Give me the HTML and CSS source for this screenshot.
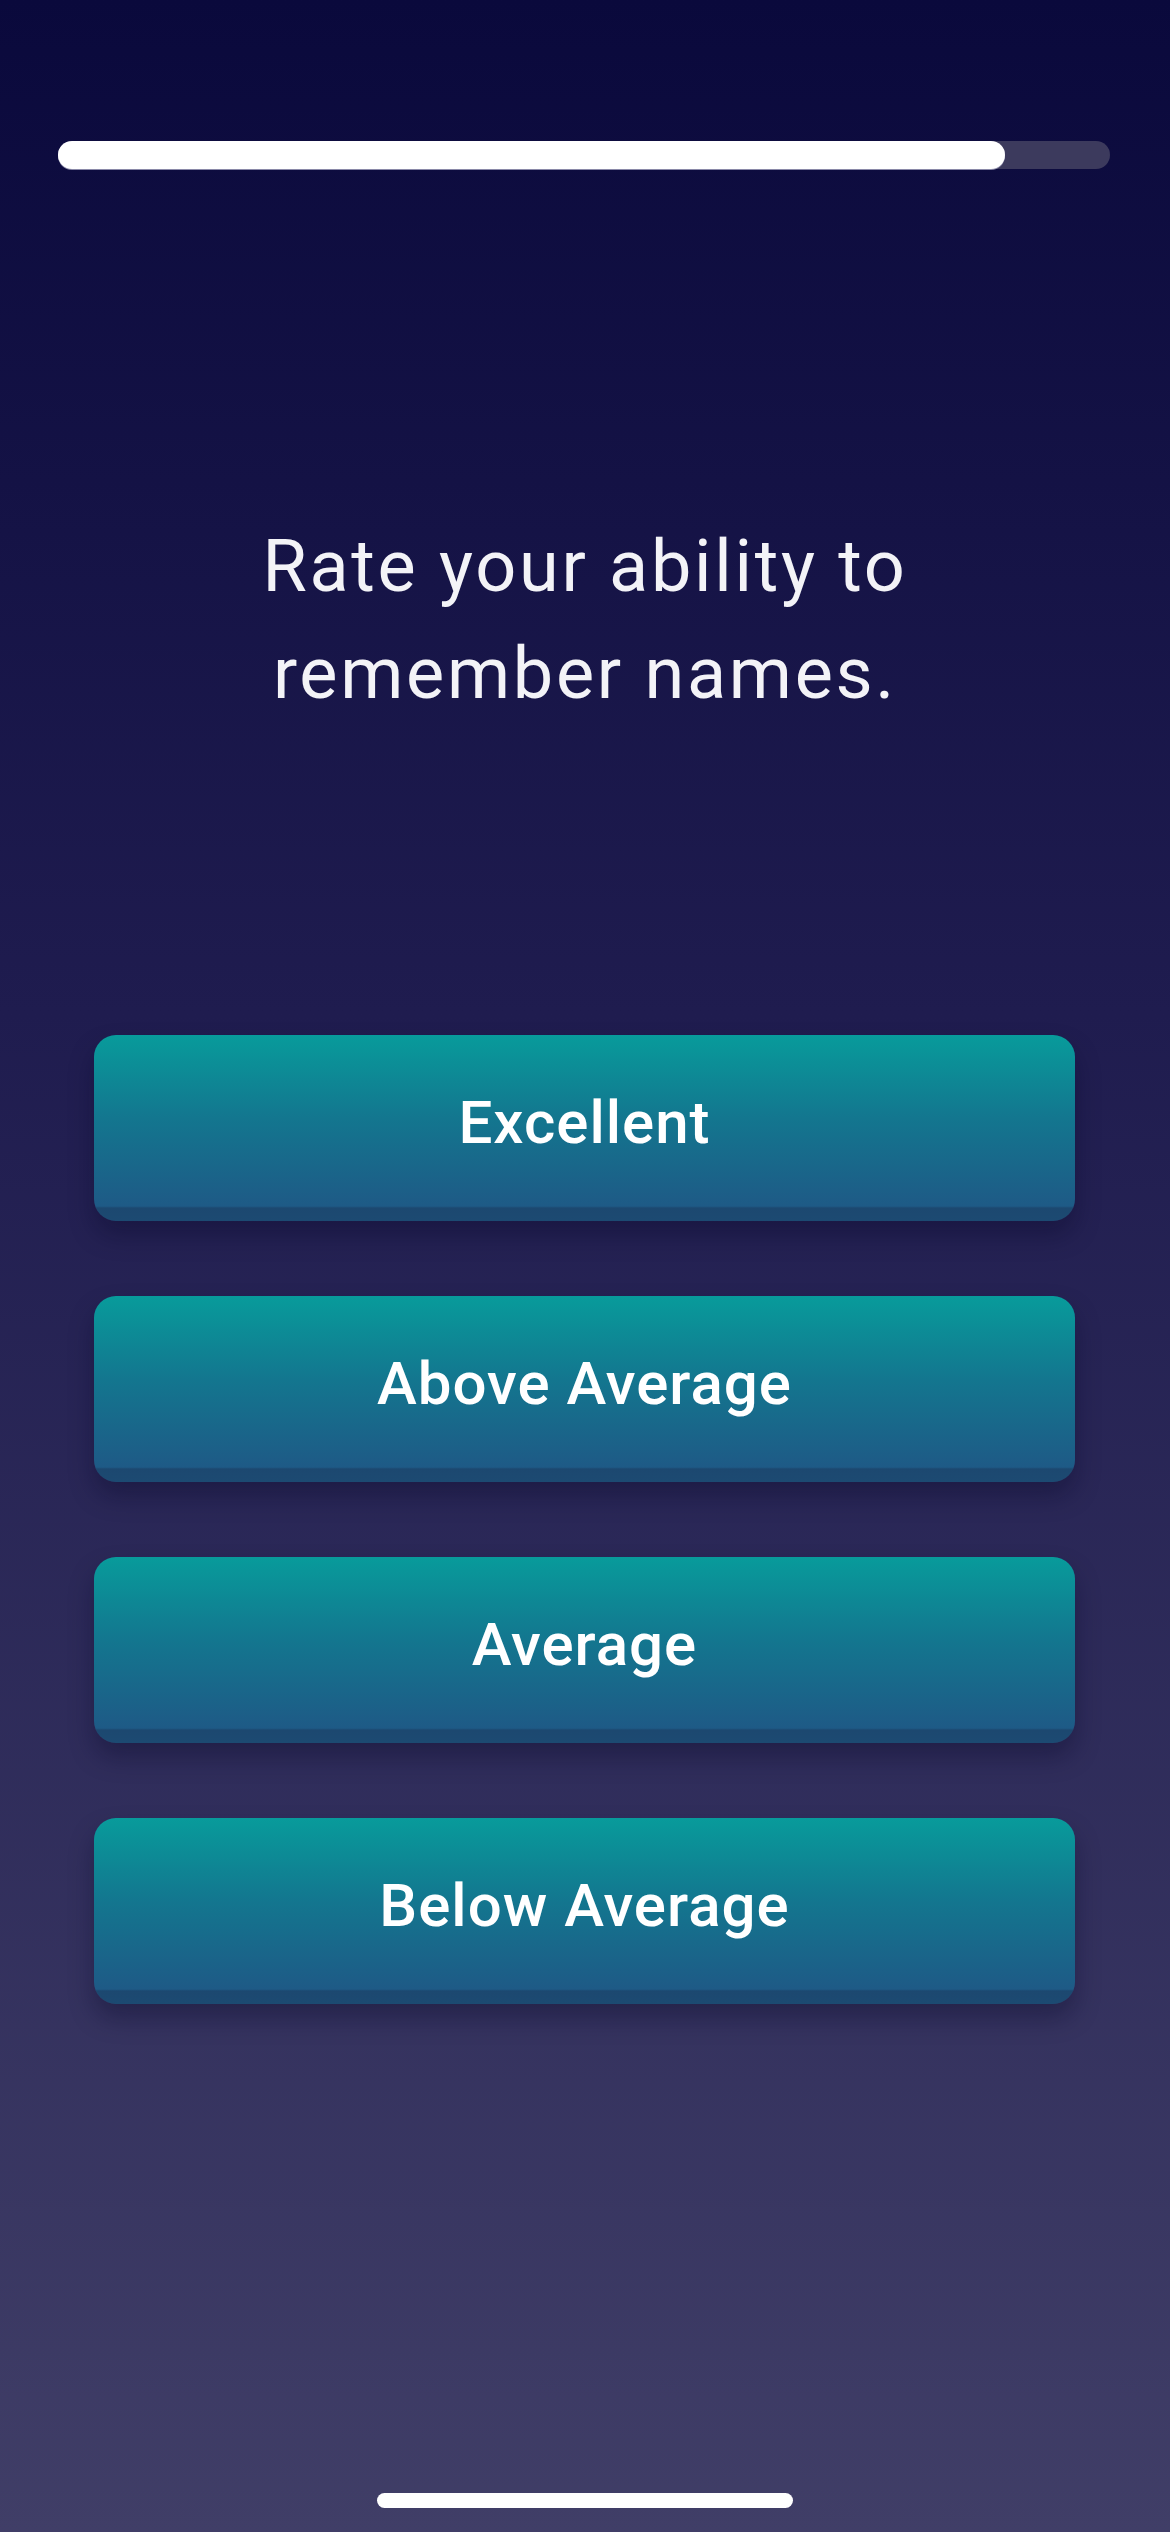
FILE: index.html
```html
<!DOCTYPE html>
<html lang="en">

<head>
    <meta charset="UTF-8">
    <meta name="viewport" content="width=device-width, initial-scale=1.0">
    <title>quiz</title>
    <link rel="stylesheet" href="styles.css">
</head>

<body>
    <div class="screen">
        <div class="progress">
            <div class="progressFill"></div>
        </div>

        <h1 class="question">Rate your ability to<br>remember names.</h1>

        <div class="answers">
            <button class="answer">Excellent</button>
            <button class="answer">Above Average</button>
            <button class="answer">Average</button>
            <button class="answer">Below Average</button>
        </div>

        <div class="homeBar"></div>
    </div>
</body>

</html>
```

FILE: styles.css
```css
* {
    margin: 0;
    padding: 0;
    box-sizing: border-box;
}

body {
    font-family: Roboto, "Noto Sans", sans-serif;
    background: linear-gradient(180deg, #0a093c 0%, #1f1c4f 40%, #403e67 100%);
    width: 1170px;
    height: 2532px;
    overflow: hidden;
}

.screen {
    display: flex;
    flex-direction: column;
    height: 100%;
    padding: 141px 0 0;
}

.progress {
    margin: 0 60px 0 58px;
    height: 28px;
    border-radius: 14px;
    background-color: #3c3a5d;
}

.progressFill {
    width: 90%;
    height: 100%;
    border-radius: 14px;
    background-color: #ffffff;
    box-shadow: 0 1px 0 #8a89a8;
}

.question {
    margin-top: 344px;
    text-align: center;
    color: #f3f3f7;
    font-weight: 400;
    font-size: 72px;
    line-height: 107px;
    letter-spacing: 2.7px;
}

.answers {
    display: flex;
    flex-direction: column;
    gap: 75px;
    margin-top: 308px;
    padding: 0 95px 0 94px;
}

.answer {
    height: 186px;
    border: none;
    border-radius: 22px;
    background: linear-gradient(180deg, #089b9b 0%, #13768f 45%, #1e5a86 92%, #1c4870 93%, #1c4a72 100%);
    box-shadow: 0 14px 24px rgba(10, 8, 40, 0.35);
    color: #ffffff;
    font-family: inherit;
    font-size: 60px;
    font-weight: 500;
    letter-spacing: 1px;
    padding-bottom: 12px;
}

.homeBar {
    margin: auto auto 24px;
    width: 416px;
    height: 15px;
    border-radius: 8px;
    background-color: #ffffff;
}
```
